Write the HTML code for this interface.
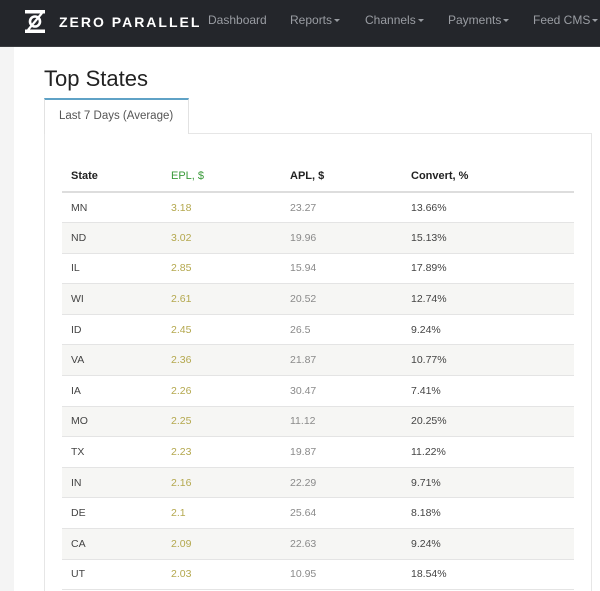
<!DOCTYPE html>
<html><head><meta charset="utf-8"><style>
*{margin:0;padding:0;box-sizing:border-box}
html,body{width:600px;height:591px;overflow:hidden}
body{background:#f4f4f4;font-family:"Liberation Sans",sans-serif;position:relative}
.nav{position:absolute;left:0;top:0;width:600px;height:47px;background:#24262b;border-bottom:1px solid #3a3c40}
.logo{position:absolute;left:25px;top:10px}
.brand{position:absolute;left:59px;top:14px;color:#fff;font-size:14px;font-weight:bold;letter-spacing:2px}
.nl{position:absolute;top:13px;color:#9a9da3;font-size:12px}
.car{display:inline-block;width:0;height:0;border-left:3px solid transparent;border-right:3px solid transparent;border-top:3px solid #9a9da3;vertical-align:middle;margin-left:2px}
.main{position:absolute;left:14px;top:47px;width:586px;height:544px;background:#fff}
h1{position:absolute;left:44px;top:66px;font-size:22px;font-weight:normal;color:#222}
.tab{position:absolute;left:44px;top:98px;width:145px;height:36px;border-top:2px solid #5fa2c6;border-left:1px solid #e2e2e2;border-right:1px solid #e2e2e2;background:#fff;z-index:2}
.tab span{position:absolute;left:14px;top:10px;font-size:11.5px;color:#555}
.box{position:absolute;left:44px;top:133px;width:548px;height:470px;border:1px solid #e6e6e6}
table{position:absolute;left:62px;top:160px;width:512px;border-collapse:collapse;font-size:10.5px}
th{text-align:left;height:32px;font-weight:bold;color:#222;border-bottom:2px solid #ddd;padding-left:9px;font-size:11px}
td{height:30.6px;padding-left:9px;color:#444;border-bottom:1px solid #e4e4e4}
tr:nth-child(odd) td{background:#f6f6f4}
td:nth-child(2){color:#b4a84e}
td:nth-child(3){color:#8a8a8a}
th.g{color:#3a9a3a;font-weight:normal}
th:nth-child(1){width:100px}th:nth-child(2){width:119px}th:nth-child(3){width:121px}
</style></head><body>
<div class="nav">
<svg class="logo" width="20" height="23" viewBox="0 0 20 23"><rect x="0" y="0" width="20" height="3.5" fill="#fff"/><rect x="0" y="19.5" width="20" height="3.5" fill="#fff"/><circle cx="10" cy="11.5" r="5" fill="none" stroke="#fff" stroke-width="2.6"/><line x1="17" y1="3" x2="3" y2="20" stroke="#fff" stroke-width="2.2"/></svg>
<div class="brand">ZERO PARALLEL</div>
<div class="nl" style="left:208px">Dashboard</div>
<div class="nl" style="left:290px">Reports<span class="car"></span></div>
<div class="nl" style="left:365px">Channels<span class="car"></span></div>
<div class="nl" style="left:448px">Payments<span class="car"></span></div>
<div class="nl" style="left:533px">Feed CMS<span class="car"></span></div>
</div>
<div class="main"></div>
<h1>Top States</h1>
<div class="tab"><span>Last 7 Days (Average)</span></div>
<div class="box"></div>
<table>
<tr><th>State</th><th class="g">EPL, $</th><th>APL, $</th><th>Convert, %</th></tr>
<tr><td>MN</td><td>3.18</td><td>23.27</td><td>13.66%</td></tr>
<tr><td>ND</td><td>3.02</td><td>19.96</td><td>15.13%</td></tr>
<tr><td>IL</td><td>2.85</td><td>15.94</td><td>17.89%</td></tr>
<tr><td>WI</td><td>2.61</td><td>20.52</td><td>12.74%</td></tr>
<tr><td>ID</td><td>2.45</td><td>26.5</td><td>9.24%</td></tr>
<tr><td>VA</td><td>2.36</td><td>21.87</td><td>10.77%</td></tr>
<tr><td>IA</td><td>2.26</td><td>30.47</td><td>7.41%</td></tr>
<tr><td>MO</td><td>2.25</td><td>11.12</td><td>20.25%</td></tr>
<tr><td>TX</td><td>2.23</td><td>19.87</td><td>11.22%</td></tr>
<tr><td>IN</td><td>2.16</td><td>22.29</td><td>9.71%</td></tr>
<tr><td>DE</td><td>2.1</td><td>25.64</td><td>8.18%</td></tr>
<tr><td>CA</td><td>2.09</td><td>22.63</td><td>9.24%</td></tr>
<tr><td>UT</td><td>2.03</td><td>10.95</td><td>18.54%</td></tr>
</table>
</body></html>
